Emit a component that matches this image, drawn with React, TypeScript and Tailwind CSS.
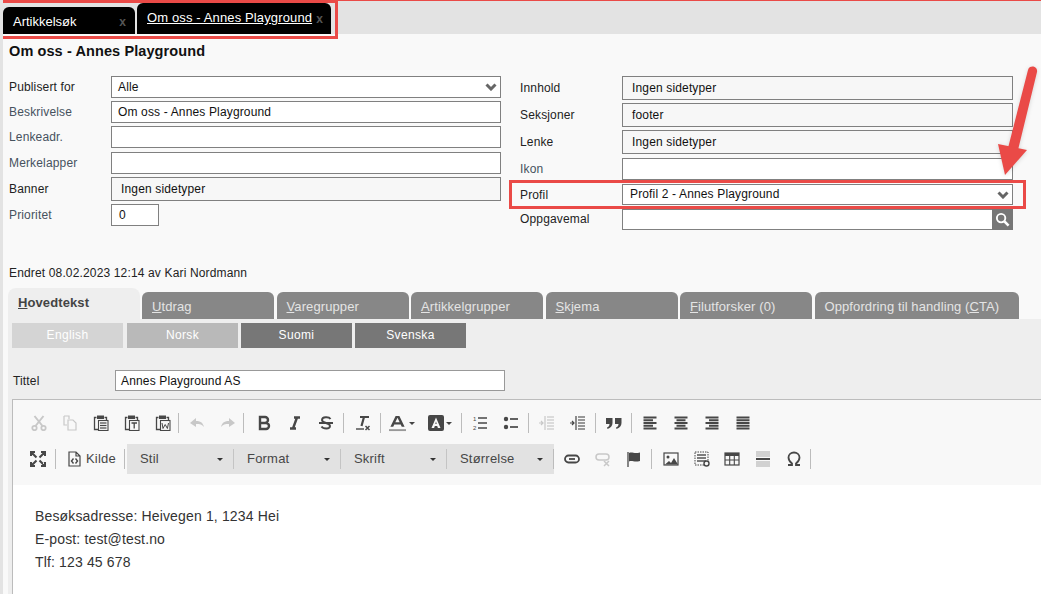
import type { ReactNode } from "react";

const font = "font-['Liberation_Sans',Arial,sans-serif]";
const boxBorder = "border border-[#808080]";

const Chevron = ({ className = "" }: { className?: string }) => (
  <svg viewBox="0 0 12 8" className={`w-[12px] h-[8px] ${className}`}>
    <path d="M1.500 1.500 6 6l4.500-4.500" fill="none" stroke="#666" strokeWidth="3" />
  </svg>
);

const Field = ({
  label,
  muted,
  children,
  className = "",
  labelClassName = "",
}: {
  label: string;
  muted?: boolean;
  children?: ReactNode;
  className?: string;
  labelClassName?: string;
}) => (
  <div className={`flex items-center ${className}`}>
    <span className={`w-[102px] shrink-0 ${muted ? "text-[#46525e]" : "text-[#222]"} ${labelClassName}`}>{label}</span>
    {children}
  </div>
);

const Input = ({ children, className = "h-[22px] w-[390px] pl-[6px] bg-white" }: { children?: ReactNode; className?: string }) => (
  <div className={`${boxBorder} flex items-center text-[#111] ${className}`}>{children}</div>
);

const tabs = [
  { key: "U", rest: "tdrag" },
  { key: "V", rest: "aregrupper" },
  { key: "A", rest: "rtikkelgrupper" },
  { key: "S", rest: "kjema" },
  { key: "F", rest: "ilutforsker (0)" },
];

const Sep = ({ className = "" }: { className?: string }) => <span className={`w-px h-[20px] bg-[#bcbcbc] shrink-0 ${className}`} />;

const Icon = ({ children, light, className = "" }: { children: ReactNode; light?: boolean; className?: string }) => (
  <span className={`w-[31px] h-[20px] shrink-0 flex items-center justify-center ${className}`}>
    <svg
      viewBox="0 0 16 16"
      className={`w-[16px] h-[16px] ${light ? "text-[#c8c8c8]" : "text-[#474747]"}`}
      fill="none"
      stroke="currentColor"
      strokeWidth="1.500"
    >
      {children}
    </svg>
  </span>
);

const Lines = ({ ys, x1 = 1, x2 = 15, w = 1.6 }: { ys: number[]; x1?: number; x2?: number; w?: number }) => (
  <>
    {ys.map((y) => (
      <path key={y} d={`M${x1} ${y}H${x2}`} strokeWidth={w} />
    ))}
  </>
);

const AlignIcon = ({ mode }: { mode: "left" | "center" | "right" | "justify" }) => {
  const short = mode === "justify" ? [1.5, 14.5] : mode === "left" ? [1.5, 11] : mode === "right" ? [5, 14.5] : [3.5, 12.5];
  return (
    <Icon>
      <path d="M1.500 2.500H14.500M1.500 13.500H14.500M1.500 8H14.500" strokeWidth="1.900" />
      <path d={`M${short[0]} 5.200H${short[1]}M${short[0]} 10.800H${short[1]}`} strokeWidth="1.900" />
    </Icon>
  );
};

// clipboard with a sheet in front, the sheet's mark differs per button
const PasteIcon = ({ children }: { children: ReactNode }) => (
  <Icon>
    <path d="M3.500 2.500h-2v12H5" strokeWidth="1.300" />
    <path d="M11.500 2.500h2V5" strokeWidth="1.300" />
    <rect x="4" y="0.500" width="7" height="3.500" fill="currentColor" stroke="none" />
    <rect x="5.500" y="5.500" width="9.500" height="10" strokeWidth="1.100" />
    {children}
  </Icon>
);

const Combo = ({ label, width, last }: { label: string; width: string; last?: boolean }) => (
  <div className={`${width} h-[30px] flex items-center relative text-[#474747] text-[13px] tracking-[0.2px] pl-[13px] shrink-0`}>
    {label}
    <span className="absolute right-[11px] top-[14px] border-x-[3.500px] border-x-transparent border-t-[3.500px] border-t-[#333]" />
    {!last && <span className="absolute right-0 top-[5px] w-px h-[20px] bg-[#c4c4c4]" />}
  </div>
);

export default function App() {
  return (
    <div className={`${font} relative w-[1041px] h-[594px] overflow-hidden bg-[#f9f9f9] text-[12px] tracking-[0.15px] border-l-[3px] border-l-[#e3e3e3]`}>
      {/* tab strip */}
      <div className="h-[34px] bg-[#e3e3e3] flex items-end gap-[2px]">
        <div className="w-[132px] h-[27px] bg-black rounded-t-[6px] text-white text-[13px] tracking-normal flex items-center justify-between pl-[10px] pr-[9px] pt-[2px]">
          Artikkelsøk
          <span className="text-[#555] font-bold text-[12px]">x</span>
        </div>
        <div className="w-[194px] h-[31px] bg-black rounded-t-[6px] text-white text-[13px] tracking-[0.13px] flex items-start justify-between pl-[10px] pr-[8px] pt-[5px]">
          <span className="underline">Om oss - Annes Playground</span>
          <span className="text-[#555] font-bold text-[12px] mt-[2px]">x</span>
        </div>
      </div>

      <h1 className="pl-[6px] pt-[8px] h-[42px] text-[14.500px] leading-[18px] font-bold text-[#111] tracking-[0.1px]">Om oss - Annes Playground</h1>

      {/* form */}
      <div className="flex pl-[6px] h-[154px]">
        <div className="w-[511px] shrink-0 flex flex-col">
          <Field label="Publisert for">
            <Input className="h-[22px] w-[390px] pl-[6px] bg-white justify-between pr-[3px]">
              Alle
              <Chevron />
            </Input>
          </Field>
          <Field label="Beskrivelse" muted className="mt-[3px]">
            <Input>Om oss - Annes Playground</Input>
          </Field>
          <Field label="Lenkeadr." muted className="mt-[3px]">
            <Input />
          </Field>
          <Field label="Merkelapper" muted className="mt-[4px]">
            <Input />
          </Field>
          <Field label="Banner" className="mt-[3px]">
            <Input className="h-[24px] w-[390px] pl-[9px] bg-[#f7f7f7]">Ingen sidetyper</Input>
          </Field>
          <Field label="Prioritet" muted className="mt-[3px]">
            <Input className="h-[22px] w-[48px] pl-[7px] bg-white">0</Input>
          </Field>
        </div>
        <div className="flex flex-col">
          <Field label="Innhold">
            <Input className="h-[24px] w-[391px] pl-[9px] bg-[#f7f7f7]">Ingen sidetyper</Input>
          </Field>
          <Field label="Seksjoner" className="mt-[3px]">
            <Input className="h-[24px] w-[391px] pl-[9px] bg-[#f7f7f7]">footer</Input>
          </Field>
          <Field label="Lenke" className="mt-[3px]">
            <Input className="h-[24px] w-[391px] pl-[9px] bg-[#f7f7f7]">Ingen sidetyper</Input>
          </Field>
          <Field label="Ikon" muted className="mt-[4px]">
            <Input className="h-[22px] w-[391px] bg-white" />
          </Field>
          <Field label="Profil" className="mt-[4px]">
            <Input className="h-[21px] w-[391px] pl-[7px] pr-[3px] pb-[2px] bg-white justify-between">
              Profil 2 - Annes Playground
              <Chevron className="mt-[2px]" />
            </Input>
          </Field>
          <Field label="Oppgavemal" className="mt-[4px]" labelClassName="pb-[2px]">
            <Input className="h-[21px] w-[391px] bg-white justify-end">
              <span className="w-[21px] h-[21px] -mr-px bg-[#777] flex items-center justify-center">
                <svg viewBox="0 0 16 16" className="w-[15px] h-[15px]" fill="none" stroke="#fff">
                  <circle cx="6.500" cy="6.500" r="4.500" strokeWidth="2" />
                  <path d="m10 10 4.500 4.500" strokeWidth="2.800" />
                </svg>
              </span>
            </Input>
          </Field>
        </div>
      </div>

      <p className="pl-[6px] mt-[36px] h-[14px] leading-[14px] text-[#222]">Endret 08.02.2023 12:14 av Kari Nordmann</p>

      {/* page tabs */}
      <div className="mt-[8px] pl-[5px] h-[31px] flex items-end gap-[2.500px] text-[13px] tracking-[0.1px]">
        <div className="w-[131.500px] h-[31px] bg-[#eee] rounded-t-[8px] font-bold text-[#444] pl-[10px] pt-[5px]">
          <u>H</u>ovedtekst
        </div>
        {tabs.map((t) => (
          <div key={t.key} className="w-[132px] h-[27px] bg-[#878787] rounded-t-[6px] text-[#e4e4e4] pl-[10px] pt-[5px]">
            <u>{t.key}</u>
            {t.rest}
          </div>
        ))}
        <div className="w-[204px] h-[27px] bg-[#878787] rounded-t-[6px] text-[#e4e4e4] pl-[10px] pt-[5px]">
          Oppfordring til handling (<u>C</u>TA)
        </div>
      </div>

      <div className="ml-[5px] bg-[#eee] h-[275px] flex flex-col">
        {/* language tabs */}
        <div className="flex pl-[4px] pt-[4px] text-white tracking-[0.35px]">
          <div className="w-[111px] h-[25px] pb-[2px] bg-[#d4d4d4] flex items-center justify-center">English</div>
          <div className="w-[111px] h-[25px] pb-[2px] ml-[4px] bg-[#b9b9b9] flex items-center justify-center">Norsk</div>
          <div className="w-[111px] h-[25px] pb-[2px] ml-[3px] bg-[#777] flex items-center justify-center">Suomi</div>
          <div className="w-[111px] h-[25px] pb-[2px] ml-[3px] bg-[#777] flex items-center justify-center">Svenska</div>
        </div>

        <div className="flex items-center pl-[5px] mt-[22px] text-[#222]">
          <span className="w-[102px]">Tittel</span>
          <div className="w-[390px] h-[21px] bg-white border border-[#999] pl-[5px] flex items-center text-[#111]">Annes Playground AS</div>
        </div>

        {/* editor */}
        <div className="ml-[4px] mt-[8px] flex-1 border-l border-t border-[#bcbcbc]">
          <div className="h-[85px] bg-[#f8f8f8] pl-[10px]">
            <div className="h-[46px] flex items-center">
              <Icon light>
                <circle cx="3.500" cy="13" r="2.200" strokeWidth="1.800" />
                <circle cx="12.500" cy="13" r="2.200" strokeWidth="1.800" />
                <path d="M11.500 11 3.500 1M4.500 11l8-10" strokeWidth="2" />
              </Icon>
              <Icon light>
                <path d="M2 1h5v3M2 1v9h3M6 5h5l3 3v7H6z" strokeWidth="1.200" />
              </Icon>
              <PasteIcon>
                <Lines ys={[8, 10.500, 13]} x1={7} x2={13.500} w={1.200} />
              </PasteIcon>
              <PasteIcon>
                <path d="M7.500 8h5.500M10.200 8v5.500" strokeWidth="1.300" />
              </PasteIcon>
              <PasteIcon>
                <path d="M7 8l1 5.500 2.200-4 2.200 4L13.500 8" strokeWidth="1" />
              </PasteIcon>
              <Sep />
              <span className="w-[2px]" />
              <Icon light>
                <path d="M1 8 7 3v3c4 0 7 1.500 8 6-2-2.500-4-3-8-3v3z" fill="currentColor" stroke="none" />
              </Icon>
              <Icon light>
                <path d="M15 8 9 3v3c-4 0-7 1.500-8 6 2-2.500 4-3 8-3v3z" fill="currentColor" stroke="none" />
              </Icon>
              <Sep />
              <span className="w-[4px]" />
              <Icon>
                <path d="M4 2h5a3 3 0 0 1 0 6H4zm0 6h6a3 3 0 0 1 0 6H4zM4 2v12" strokeWidth="2.400" />
              </Icon>
              <Icon>
                <path d="M7 2.500h6M3 13.500h6M10 2.500 6 13.500" strokeWidth="2.400" />
              </Icon>
              <Icon>
                <path d="M12.500 4C11 1.500 4 1.500 4 5c0 3.500 8 2.500 8 6 0 3.500-7 3-8.500.5M1 8h14" strokeWidth="1.900" />
              </Icon>
              <Sep className="ml-[2px]" />
              <span className="w-[3px]" />
              <Icon>
                <path d="M5 2h9M9 2 6.500 11" strokeWidth="2.200" />
                <path d="M1 14h8" strokeWidth="1.400" />
                <path d="m10.500 11 4 4m0-4-4 4" strokeWidth="1.500" />
              </Icon>
              <Sep className="ml-[2px]" />
              <span className="w-[3px]" />
              <span className="w-[36px] h-[20px] flex items-center justify-center gap-[3px]">
                <svg viewBox="0 0 18 18" className="w-[17px] h-[17px]">
                  <path fillRule="evenodd" d="M1.500 12.500 7 1h4l5.500 11.500h-3L12.400 10H5.600l-1.100 2.500zM6.700 7.700h4.600L9 3z" fill="#474747" />
                  <rect y="15" width="18" height="2" fill="#999" />
                </svg>
                <span className="border-x-[3px] border-x-transparent border-t-[3px] border-t-[#444]" />
              </span>
              <span className="w-[40px] h-[20px] flex items-center justify-center gap-[2px]">
                <svg viewBox="0 0 16 16" className="w-[16px] h-[16px]">
                  <path fillRule="evenodd" d="M2 0h12a2 2 0 0 1 2 2v12a2 2 0 0 1-2 2H2a2 2 0 0 1-2-2V2a2 2 0 0 1 2-2zm6 2.500L3.500 13h2.600l.7-2h2.400l.7 2h2.600zm0 4 .7 2.500H7.300z" fill="#474747" />
                </svg>
                <span className="border-x-[3px] border-x-transparent border-t-[3px] border-t-[#444]" />
              </span>
              <Sep className="ml-[1px]" />
              <span className="w-[2px]" />
              <Icon>
                <Lines ys={[3, 8, 13]} x1={6} x2={15} w={1.500} />
                <text x="1" y="6" fontSize="6" fill="currentColor" stroke="none">1</text>
                <text x="1" y="15" fontSize="6" fill="currentColor" stroke="none">2</text>
              </Icon>
              <Icon>
                <Lines ys={[4, 12]} x1={7} x2={15} w={1.700} />
                <circle cx="3" cy="4" r="2.200" fill="currentColor" stroke="none" />
                <circle cx="3" cy="12" r="2.200" fill="currentColor" stroke="none" />
              </Icon>
              <Sep className="ml-[2px]" />
              <Icon light className="ml-[2px]">
                <Lines ys={[2, 5, 8, 11, 14]} x1={8} x2={15} w={1.200} />
                <path d="M6 1v14M0 8h4M2 6 4 8 2 10" strokeWidth="1.200" />
              </Icon>
              <Icon>
                <Lines ys={[2, 5, 8, 11, 14]} x1={8} x2={15} w={1.100} />
                <path d="M6 1v14M0 8h4M2 6 4 8 2 10" strokeWidth="1.200" />
              </Icon>
              <Sep className="ml-[2px]" />
              <Icon className="ml-[2px]">
                <path d="M0 3h6.500v5c0 3-2 5-5 6l-.5-1.500c1.500-.5 2.500-1.500 2.500-3.500H0zM9 3h6.500v5c0 3-2 5-5 6l-.5-1.500c1.500-.5 2.500-1.500 2.500-3.500H9z" fill="currentColor" stroke="none" />
              </Icon>
              <Sep className="ml-[2px]" />
              <span className="w-[2px]" />
              <AlignIcon mode="left" />
              <AlignIcon mode="center" />
              <AlignIcon mode="right" />
              <AlignIcon mode="justify" />
            </div>
            <div className="flex items-center h-[30px] mt-[-2px]">
              <Icon className="-ml-[1px]">
                <path d="M6.500 6.500 1.500 1.500M1 5V1h4M9.500 6.500l5-5M11 1h4v4M6.500 9.500l-5 5M1 11v4h4M9.500 9.500l5 5M15 11v4h-4" strokeWidth="2.100" />
              </Icon>
              <Sep className="ml-[2px]" />
              <Icon className="ml-[2px]">
                <path d="M3 1h7l4 4v10H3zM10 1v4h4" strokeWidth="1.200" />
                <path d="M7.500 7.500 5.500 10l2 2.500M9.500 7.500l2 2.500-2 2.500" strokeWidth="1.400" />
              </Icon>
              <span className="text-[13px] tracking-[0.2px] text-[#474747] -ml-[3px] w-[38px]">Kilde</span>
              <Sep />
              <div className="flex ml-[2px] bg-[#e2e2e2]">
                <Combo label="Stil" width="w-[107px]" />
                <Combo label="Format" width="w-[107px]" />
                <Combo label="Skrift" width="w-[106px]" />
                <Combo label="Størrelse" width="w-[107px]" last />
              </div>
              <Sep className="-ml-[1px]" />
              <span className="w-[2px]" />
              <Icon>
                <rect x="1" y="4.500" width="14" height="7" rx="3.500" strokeWidth="1.800" />
                <path d="M5 8h6" strokeWidth="1.800" />
              </Icon>
              <Icon light>
                <rect x="1" y="3" width="13" height="6" rx="3" strokeWidth="1.500" />
                <path d="m9 10 5 5m0-5-5 5" strokeWidth="1.500" />
              </Icon>
              <Icon>
                <path d="M2 1v15" strokeWidth="1.300" />
                <path d="M3 2c3-1.500 5 1 11-.5V10c-6 1.500-8-1-11 .5z" fill="currentColor" stroke="none" />
              </Icon>
              <Sep className="ml-[2px]" />
              <span className="w-[3px]" />
              <Icon>
                <rect x="1" y="2" width="14" height="12" strokeWidth="1.200" />
                <circle cx="5" cy="6" r="1.500" fill="currentColor" stroke="none" />
                <path d="M2 13.500 6 10l2 2 3-5 4 6.500z" fill="currentColor" stroke="none" />
              </Icon>
              <Icon>
                <rect x="1" y="1" width="13" height="13" strokeWidth="1" strokeDasharray="1.500 1" />
                <Lines ys={[4, 7, 10]} x1={3} x2={12} w={1.400} />
                <circle cx="12.500" cy="12.500" r="2.500" fill="#f8f8f8" strokeWidth="1.400" />
              </Icon>
              <Icon className="-ml-[1px]">
                <rect x="1" y="2" width="14" height="12" strokeWidth="1.200" />
                <path d="M1 3.500h14" strokeWidth="3" />
                <path d="M1 9h14M5.700 5v9M10.300 5v9" strokeWidth="1.100" />
              </Icon>
              <Icon>
                <path d="M1 8h14" strokeWidth="2" />
                <g stroke="#aaa">
                  <Lines ys={[1, 3, 5, 11, 13, 15]} w={1} />
                </g>
              </Icon>
              <Icon>
                <path d="M2 14h4v-1.500C4 11 2.500 9 2.500 6.500 2.500 3.500 5 1.500 8 1.500s5.500 2 5.500 5c0 2.500-1.500 4.500-3.500 6V14h4" strokeWidth="1.800" />
              </Icon>
              <Sep className="ml-[1px]" />
            </div>
          </div>
          <div className="bg-white h-[200px] pl-[22px] pt-[20px] text-[14px] leading-[23px] text-[#333] tracking-[0.15px]">
            <p>Besøksadresse: Heivegen 1, 1234 Hei</p>
            <p>E-post: test@test.no</p>
            <p>Tlf: 123 45 678</p>
          </div>
        </div>
      </div>

      {/* annotations drawn on top of the screenshot */}
      <div className="absolute top-0 -left-[3px] w-[1041px] h-px bg-[#ea4a47]" />
      <div className="absolute top-0 -left-[3px] w-[338px] h-[39px] border-[3px] border-[#ea4a47]" />
      <div className="absolute top-[180px] left-[506px] w-[517px] h-[29px] border-[3px] border-[#ea4a47]" />
      <svg viewBox="0 0 60 120" className="absolute top-[64px] left-[987px] w-[60px] h-[120px] drop-shadow-sm">
        <path d="M38 6a4.600 4.600 0 0 1 9 2L28 86l-10-2z" fill="#ea4a47" />
        <path d="M8 80l29 6-22 25z" fill="#ea4a47" />
      </svg>
    </div>
  );
}
